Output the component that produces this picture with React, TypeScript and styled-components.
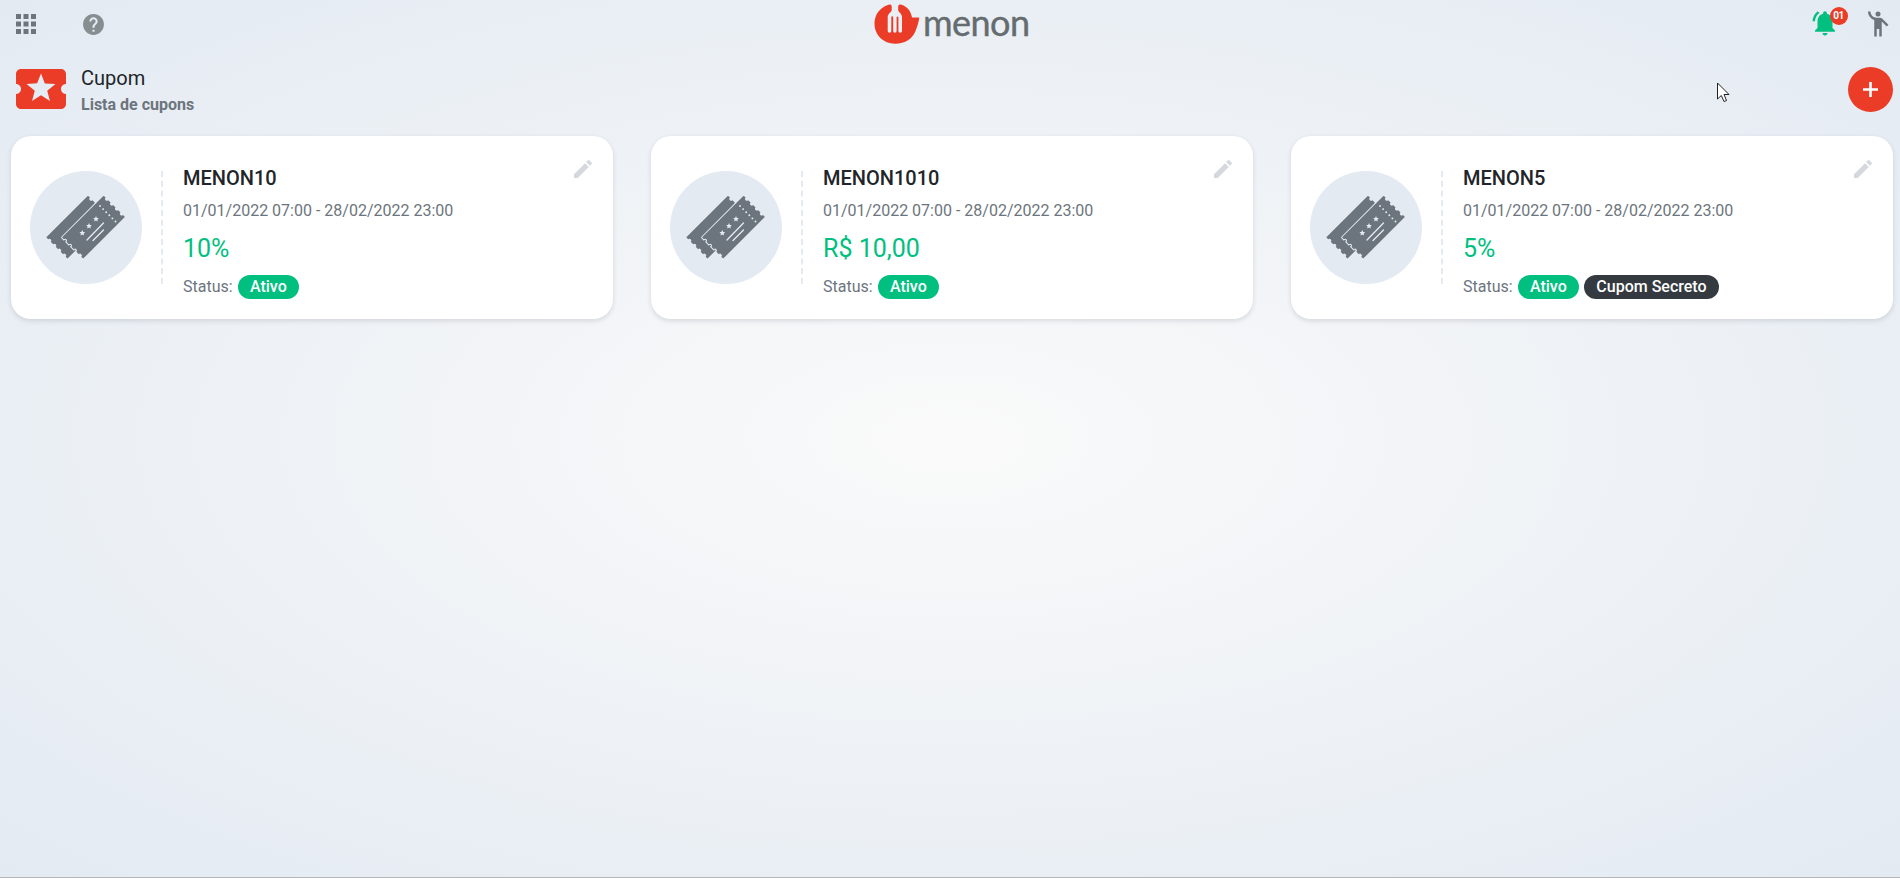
import React from "react";
import styled, { createGlobalStyle } from "styled-components";
import { MdApps, MdEdit, MdEmojiPeople, MdHelp, MdLocalPlay, MdNotificationsActive } from "react-icons/md";

const GlobalStyle = createGlobalStyle`
  * { box-sizing: border-box; }
  body { margin: 0; font-family: Roboto, sans-serif; color: #212529; }
  svg { display: block; }
`;

const Page = styled.div`
  height: 100vh;
  overflow: hidden;
  background: radial-gradient(#fafafa, #e3eaf2);
  border-bottom: 1px solid #b4b6b9;
`;

const TopBar = styled.header`
  display: grid;
  grid-template-columns: 1fr auto 1fr;
  height: 48px;
  padding: 0 7px 0 11px;
`;

const BarGroup = styled.div<{ $end?: boolean }>`
  display: flex;
  align-items: center;
  justify-content: ${(p) => (p.$end ? "flex-end" : "flex-start")};
  gap: ${(p) => (p.$end ? "23.5px" : "39.5px")};
  height: 48px;
  color: #6c757d;
`;

const HelpIcon = styled(MdHelp)`
  color: #868e92;
`;

const Bell = styled.div`
  position: relative;
  margin-top: -3px;
  color: #00bf7f;
`;

const Badge = styled.span`
  position: absolute;
  top: -1px;
  left: 20px;
  width: 18px;
  height: 18px;
  border-radius: 50%;
  background: #ea3c26;
  color: #fff;
  font-size: 10px;
  font-weight: 700;
  line-height: 18px;
  letter-spacing: -0.5px;
  text-align: center;
`;

const PageHead = styled.div`
  display: flex;
  align-items: center;
  height: 60px;
  margin: 11px 7px 17px 11px;
  color: #ea3c26;
`;

const Titles = styled.div`
  flex: 1;
  margin-left: 10px;
  padding-top: 4px;
`;

const Title = styled.h1`
  margin: 0;
  font-size: 20px;
  font-weight: 400;
  line-height: 26px;
  color: #212529;
`;

const Subtitle = styled.div`
  font-size: 16px;
  font-weight: 700;
  line-height: 27px;
  color: #6c757d;
`;

const AddButton = styled.button`
  display: grid;
  place-items: center;
  width: 45px;
  height: 45px;
  padding: 0;
  border: 0;
  border-radius: 50%;
  background: #ea3c26;
  color: #fff;
`;

const Grid = styled.main`
  display: grid;
  grid-template-columns: repeat(3, 1fr);
  gap: 38px;
  padding: 0 7px 0 11px;
`;

const Card = styled.article`
  display: flex;
  height: 183px;
  padding: 35px 18px 0 19px;
  border-radius: 20px;
  background: #fff;
  box-shadow: 0 2px 5px rgba(60, 70, 80, 0.16);
`;

const Avatar = styled.div`
  display: grid;
  place-items: center;
  width: 112px;
  height: 113px;
  border-radius: 50%;
  background: #e3eaf2;
`;

const Divider = styled.div`
  height: 113px;
  margin: 0 20px 0 19px;
  border-left: 2px dashed #e3eaf2;
`;

const Info = styled.div`
  flex: 1;
  margin-top: -8px;
`;

const Code = styled.div`
  font-size: 20px;
  font-weight: 500;
  line-height: 30px;
`;

const Period = styled.div`
  margin-top: 6px;
  font-size: 16px;
  line-height: 24px;
  color: #6c757d;
`;

const Value = styled.div`
  margin-top: 9px;
  font-size: 25px;
  line-height: 34px;
  color: #00bf7f;
`;

const Status = styled.div`
  display: flex;
  align-items: center;
  gap: 5px;
  margin-top: 9px;
  font-size: 16px;
  line-height: 24px;
  color: #6c757d;
`;

const Pill = styled.span<{ $dark?: boolean }>`
  padding: 0 12.3px;
  border-radius: 12px;
  background: ${(p) => (p.$dark ? "#343a40" : "#00bf7f")};
  color: #fff;
  font-weight: 500;
`;

const EditIcon = styled(MdEdit)`
  margin-top: -14px;
  color: #d5d8dc;
`;

const Pointer = styled.svg`
  position: absolute;
  left: 1717px;
  top: 82px;
`;

const LogoSvg = styled.svg`
  margin-left: -4px;
`;

const Logo = () => (
  <LogoSvg width="160" height="48" viewBox="0 0 160 48">
    <path
      fill="#ea3c26"
      d="M18.500 4.700C9.500 7.500 4.500 15 4.500 23.500C4.500 35 13.500 43.700 25 43.700C35.500 43.700 42.500 38.500 45.300 31.500C47.200 27 48.600 22.500 49.300 17.500H42C41 11.500 37.500 6.500 31.500 4.700Q29 4 28.200 6V10C28.200 12 32 13.500 32 17V31A1.800 1.800 0 0 1 28.400 31V17A1 1 0 0 0 26.600 17V31A1.700 1.700 0 0 1 23.200 31V17A1 1 0 0 0 21.300 17V31A1.800 1.800 0 0 1 17.700 31V17C17.700 13.500 21.700 12 21.700 10V6Q21 4 18.500 4.700Z"
    />
    <text
      x="53" y="35.5" fontFamily="Lato, sans-serif" fontSize="36" textLength="107"
      fill="#646c6f" stroke="#646c6f" strokeWidth="0.4" strokeLinejoin="round"
    >
      menon
    </text>
  </LogoSvg>
);

const PlusIcon = () => (
  <svg width="15" height="15" viewBox="0 0 15 15">
    <path d="M7.500 0V15M0 7.500H15" stroke="currentColor" strokeWidth="2.600" />
  </svg>
);

const TICKET =
  "M.8 0H2.700a1.800 1.800 0 0 0 3.600 0H9.700a1.800 1.800 0 0 0 3.600 0H16.700a1.800 1.800 0 0 0 3.600 0H23.700a1.800 1.800 0 0 0 3.600 0H29.200Q30 0 30 .8V58.200Q30 59 29.200 59H27.300a1.800 1.800 0 0 0-3.600 0H20.300a1.800 1.800 0 0 0-3.600 0H13.300a1.800 1.800 0 0 0-3.600 0H6.300a1.800 1.800 0 0 0-3.600 0H.8Q0 59 0 58.200V.8Q0 0 .8 0Z";

const STAR = "M0-3L.9-1.100L2.900-.9L1.400.5L1.800 2.500L0 1.500L-1.800 2.500L-1.400.5L-2.900-.9L-.9-1.100Z";

const Tickets = () => (
  <svg width="80" height="65" viewBox="0 0 80 65" fill="#6c757d">
    <path d={TICKET} transform="translate(42 .7) rotate(45)" />
    <path d={TICKET} transform="translate(57.7 .7) rotate(45)" stroke="#e3eaf2" strokeWidth="2" />
    <path d={TICKET} transform="translate(57.7 .7) rotate(45)" />
    <g fill="#e3eaf2">
      {[0, 1, 2, 3, 4, 5].map((i) => (
        <circle key={i} cx={54 + i * 3.1} cy={11 + i * 3.1} r="0.95" />
      ))}
      <path d={STAR} transform="translate(50 24)" />
      <path d={STAR} transform="translate(43 31)" />
      <path d={STAR} transform="translate(36.3 38)" />
    </g>
    <path d="M57.500 28L41 45M57.500 35L47 45.500" stroke="#e3eaf2" strokeWidth="1.300" strokeLinecap="round" />
  </svg>
);

const coupons = [
  { code: "MENON10", value: "10%", secret: false },
  { code: "MENON1010", value: "R$ 10,00", secret: false },
  { code: "MENON5", value: "5%", secret: true },
];

export default function App() {
  return (
    <Page>
      <GlobalStyle />
      <TopBar>
        <BarGroup>
          <MdApps size={30} />
          <HelpIcon size={25} />
        </BarGroup>
        <Logo />
        <BarGroup $end>
          <Bell><MdNotificationsActive size={30} /><Badge>01</Badge></Bell>
          <MdEmojiPeople size={30} />
        </BarGroup>
      </TopBar>
      <PageHead>
        <MdLocalPlay size={60} />
        <Titles>
          <Title>Cupom</Title>
          <Subtitle>Lista de cupons</Subtitle>
        </Titles>
        <AddButton><PlusIcon /></AddButton>
      </PageHead>
      <Grid>
        {coupons.map((c) => (
          <Card key={c.code}>
            <Avatar><Tickets /></Avatar>
            <Divider />
            <Info>
              <Code>{c.code}</Code>
              <Period>01/01/2022 07:00 - 28/02/2022 23:00</Period>
              <Value>{c.value}</Value>
              <Status>Status: <Pill>Ativo</Pill>{c.secret && <Pill $dark>Cupom Secreto</Pill>}</Status>
            </Info>
            <EditIcon size={24} />
          </Card>
        ))}
      </Grid>
      <Pointer width="13" height="21" viewBox="0 0 13 21">
        <path d="M.5 1V17L4.300 13.500L7 19.500L9.500 18.500L7 12.500H12Z" fill="#fff" stroke="#222" />
      </Pointer>
    </Page>
  );
}
